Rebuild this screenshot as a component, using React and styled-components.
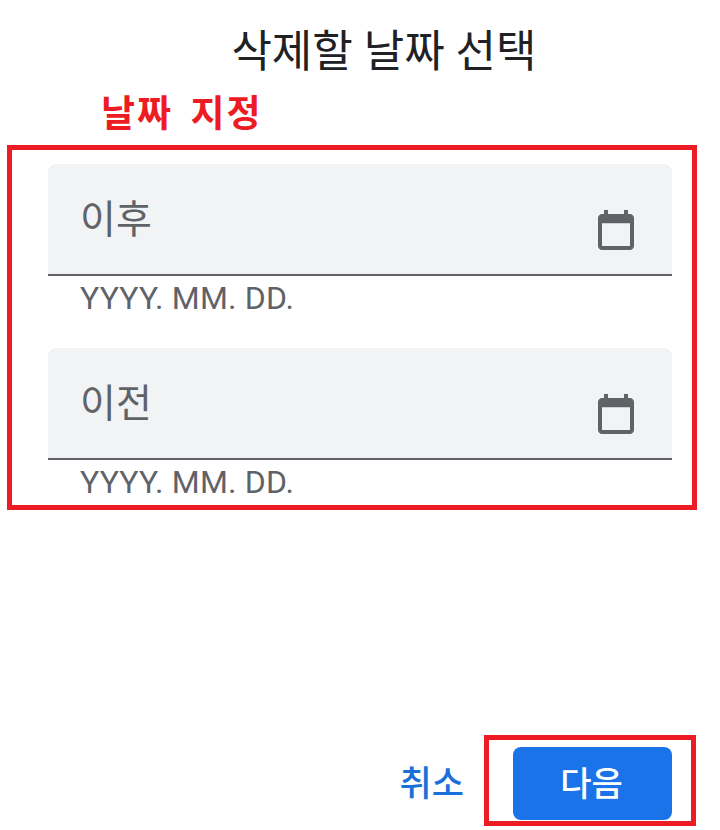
import React from "react";
import styled, { createGlobalStyle } from "styled-components";

const Global = createGlobalStyle`
  html, body { margin: 0; padding: 0; background: #fff; }
  body { font-family: Roboto, "Noto Sans CJK KR", sans-serif; }
`;

const Page = styled.div`
  width: 720px;
  height: 830px;
  overflow: hidden;
  display: flex;
  flex-direction: column;
  box-sizing: border-box;
`;

const Title = styled.h1`
  margin: 0;
  padding: 24px 0 0 48px;
  height: 88px;
  box-sizing: border-box;
  text-align: center;
  font-size: 44px;
  line-height: 56px;
  font-weight: 400;
  color: #202124;
  font-family: Roboto, "Noto Sans CJK KR", sans-serif;
`;

const Note = styled.div`
  margin-left: 101px;
  height: 57px;
  margin-top: -2px;
  margin-bottom: 2px;
  font-family: "Noto Sans CJK KR", sans-serif;
  font-size: 37px;
  line-height: 50px;
  font-weight: 700;
  letter-spacing: 2px;
  word-spacing: 7px;
  color: #ed1c24;
`;

const RedFrame = styled.div`
  box-sizing: border-box;
  border: 5px solid #ed1c24;
`;

const FieldFrame = styled(RedFrame)`
  width: 690px;
  height: 365px;
  margin-left: 7px;
  padding: 14px 20px 0 36px;
  display: flex;
  flex-direction: column;
  gap: 18px;
`;

const FieldGroup = styled.div`
  display: flex;
  flex-direction: column;
`;

const Field = styled.div`
  box-sizing: border-box;
  height: 112px;
  background: #f1f3f4;
  border-radius: 8px 8px 0 0;
  border-bottom: 2px solid #5f6368;
  padding: 0 32px 0 32px;
  display: flex;
  justify-content: space-between;
`;

const FieldLabel = styled.span`
  font-size: 39px;
  line-height: 50px;
  margin-top: 31px;
  color: #5f6368;
`;

const CalendarIcon = styled.svg`
  width: 48px;
  height: 48px;
  margin-top: 42px;
  fill: #5f6368;
  flex: none;
`;

const Hint = styled.div`
  padding-left: 32px;
  height: 54px;
  font-size: 32px;
  line-height: 44px;
  letter-spacing: 0.17px;
  color: #5f6368;
  font-family: Roboto, sans-serif;
`;

const Footer = styled.div`
  margin-top: 225px;
  padding-right: 24px;
  display: flex;
  justify-content: flex-end;
  align-items: center;
  gap: 20px;
`;

const TextButton = styled.button`
  border: 0;
  background: none;
  padding: 8px 0 0;
  font-family: Roboto, "Noto Sans CJK KR", sans-serif;
  font-size: 35px;
  line-height: 44px;
  font-weight: 500;
  color: #1a6fd8;
`;

const ButtonFrame = styled(RedFrame)`
  width: 212px;
  height: 91px;
  padding: 7px 19px 1px 24px;
`;

const PrimaryButton = styled.button`
  width: 100%;
  height: 100%;
  border: 0;
  border-radius: 8px;
  background: #1a73e8;
  color: #fff;
  padding: 0 2px 4px 0;
  font-family: Roboto, "Noto Sans CJK KR", sans-serif;
  font-size: 34px;
  font-weight: 500;
`;

const Calendar = () => (
  <CalendarIcon viewBox="0 0 24 24" aria-hidden="true">
    <path d="M19 4h-1V2h-2v2H8V2H6v2H5c-1.1 0-2 .9-2 2v14c0 1.1.9 2 2 2h14c1.1 0 2-.9 2-2V6c0-1.1-.9-2-2-2zm0 16H5V8.6h14V20z" />
  </CalendarIcon>
);

const DateField = ({ label }) => (
  <FieldGroup>
    <Field>
      <FieldLabel>{label}</FieldLabel>
      <Calendar />
    </Field>
    <Hint>YYYY. MM. DD.</Hint>
  </FieldGroup>
);

export default function App() {
  return (
    <Page>
      <Global />
      <Title>삭제할 날짜 선택</Title>
      <Note>날짜 지정</Note>
      <FieldFrame>
        <DateField label="이후" />
        <DateField label="이전" />
      </FieldFrame>
      <Footer>
        <TextButton>취소</TextButton>
        <ButtonFrame>
          <PrimaryButton>다음</PrimaryButton>
        </ButtonFrame>
      </Footer>
    </Page>
  );
}
